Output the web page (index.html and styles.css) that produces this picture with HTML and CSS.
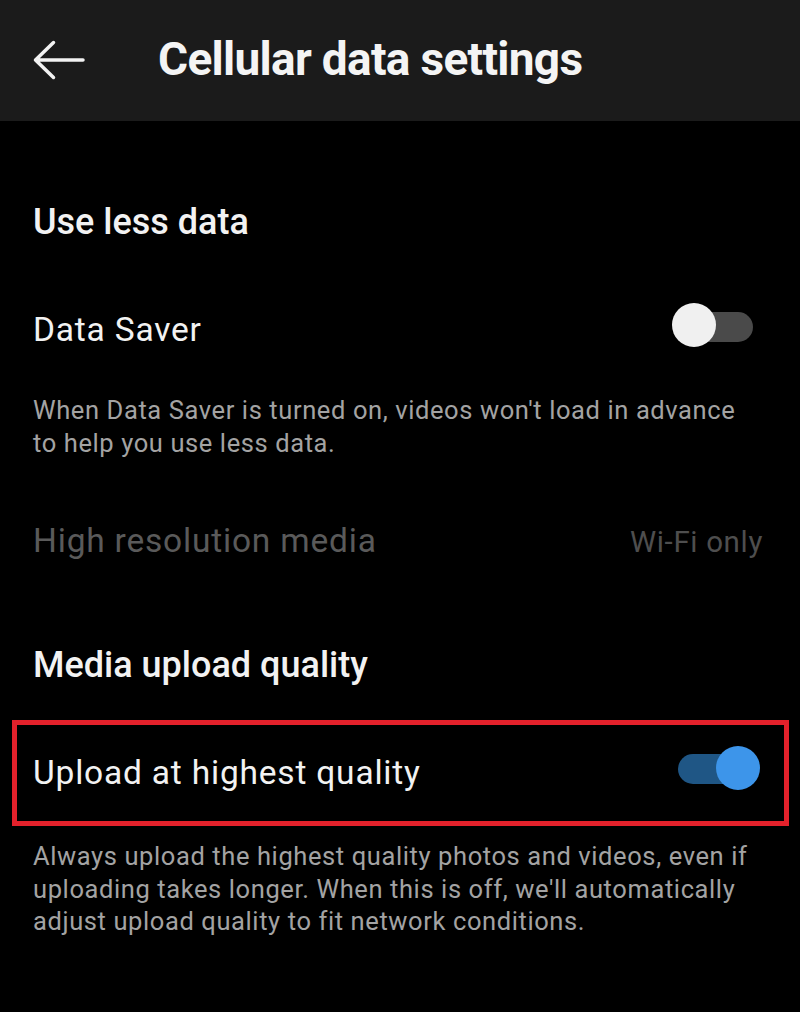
FILE: index.html
```html
<!DOCTYPE html>
<html>
<head>
<meta charset="utf-8">
<link rel="stylesheet" href="styles.css">
</head>
<body>
<header class="topbar">
  <svg class="back" width="52" height="40" viewBox="0 0 52 40">
    <path d="M50 20H2.5M20.5 2.5L2.5 20L20.5 37.5" fill="none" stroke="#f2f2f2" stroke-width="3.5" stroke-linecap="round" stroke-linejoin="round"/>
  </svg>
  <h1 class="title">Cellular data settings</h1>
</header>
<main class="content">
  <h2 class="section section-first">Use less data</h2>
  <div class="row row-saver">
    <span class="label">Data Saver</span>
    <span class="toggle off"><span class="track"></span><span class="thumb"></span></span>
  </div>
  <p class="desc desc-saver">When Data Saver is turned on, videos won't load in advance<br>to help you use less data.</p>
  <div class="row row-hires">
    <span class="label dim">High resolution media</span>
    <span class="value">Wi-Fi only</span>
  </div>
  <h2 class="section section-media">Media upload quality</h2>
  <div class="row row-upload highlighted">
    <span class="label">Upload at highest quality</span>
    <span class="toggle on"><span class="track"></span><span class="thumb"></span></span>
  </div>
  <p class="desc desc-upload">Always upload the highest quality photos and videos, even if<br>uploading takes longer. When this is off, we'll automatically<br>adjust upload quality to fit network conditions.</p>
</main>
</body>
</html>
```
FILE: styles.css
```css
html, body {
  margin: 0;
  padding: 0;
  background: #000;
  width: 800px;
  height: 1012px;
  overflow: hidden;
  font-family: Roboto, "Liberation Sans", sans-serif;
  color: #f2f2f2;
}
.topbar {
  height: 121px;
  background: #1b1b1b;
  display: flex;
  align-items: center;
  box-sizing: border-box;
  padding-left: 33px;
}
.back {
  display: block;
  margin-top: -1px;
}
.title {
  margin: -3px 0 0 73px;
  font-size: 46px;
  line-height: 54px;
  font-weight: 700;
  letter-spacing: -0.7px;
  color: #f4f4f4;
}
.content {
  padding: 0 33px;
}
.section {
  margin: 0;
  font-weight: 500;
  font-size: 36px;
  line-height: 40px;
  color: #f2f2f2;
}
.section-first {
  padding-top: 81px;
}
.row {
  display: flex;
  align-items: flex-start;
  justify-content: space-between;
}
.label {
  font-size: 33.5px;
  line-height: 44px;
  letter-spacing: 0.8px;
}
.row-saver {
  margin-top: 61px;
}
.row-saver .label {
  margin-top: 5px;
}
.toggle {
  position: relative;
  display: block;
  height: 44px;
}
.track {
  position: absolute;
  height: 30px;
  border-radius: 15px;
}
.thumb {
  position: absolute;
  top: 0;
  width: 44px;
  height: 44px;
  border-radius: 50%;
}
.toggle.off {
  width: 81px;
  margin-right: 14px;
}
.toggle.off .track { top: 9px; left: 18px; right: 0; background: #4a4a4a; }
.toggle.off .thumb { left: 0; background: #f0f0f0; }
.toggle.on {
  width: 82px;
  margin-top: 21px;
}
.toggle.on .track { top: 8px; left: 0; right: 12px; background: #1f5685; }
.toggle.on .thumb { right: 0; background: #3d95ea; }
.desc {
  margin: 0;
  font-size: 25.5px;
  line-height: 32.5px;
  letter-spacing: 0.6px;
  color: #a3a3a3;
}
.desc-saver {
  margin-top: 42px;
}
.row-hires {
  margin-top: 60px;
  align-items: baseline;
  padding-right: 4px;
}
.dim { color: #5a5a5a; }
.value {
  font-size: 29.5px;
  letter-spacing: 0.65px;
  color: #4e4e4e;
}
.section-media {
  margin-top: 82px;
}
.highlighted {
  margin: 35px -22px 0 -21px;
  height: 106px;
  box-sizing: border-box;
  border: 5px solid #e3212b;
  padding: 0 24px 0 16px;
}
.highlighted .label {
  margin-top: 26px;
}
.desc-upload {
  margin-top: 14px;
}
```
